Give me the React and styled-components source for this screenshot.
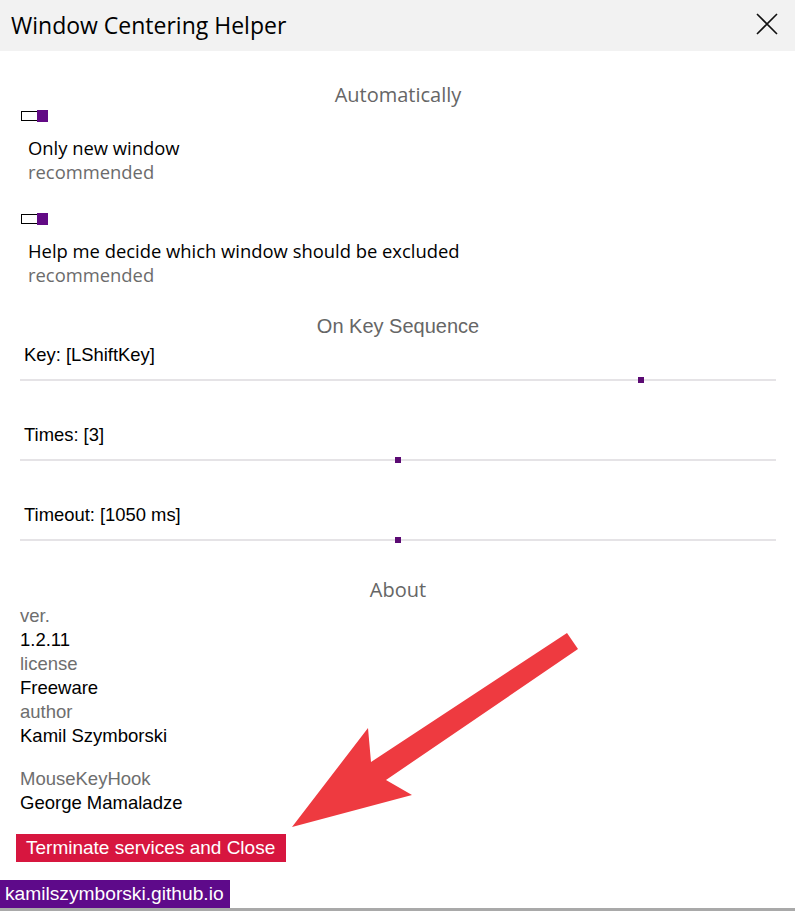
import styled, { createGlobalStyle } from 'styled-components'

const GlobalStyle = createGlobalStyle`
    html, body {
        margin: 0;
        padding: 0;
        background: #ffffff;
    }
    body {
        font-family: 'Liberation Sans', Arial, sans-serif;
        color: #000;
    }
`

const accent = '#620a85'

const options = [
    { title: 'Only new window', note: 'recommended' },
    { title: 'Help me decide which window should be excluded', note: 'recommended' },
]

const sliders = [
    { label: 'Key: [LShiftKey]', value: 82.2 },
    { label: 'Times: [3]', value: 50 },
    { label: 'Timeout: [1050 ms]', value: 50 },
]

const about = [
    { label: 'ver.', value: '1.2.11' },
    { label: 'license', value: 'Freeware' },
    { label: 'author', value: 'Kamil Szymborski' },
]

const Toggle = () => (
    <ToggleBox>
        <ToggleTrack />
        <ToggleKnob />
    </ToggleBox>
)

const Slider = ({ label, value }) => (
    <SliderBlock>
        <SliderLabel>{label}</SliderLabel>
        <Track>
            <Thumb style={{ left: `${value}%` }} />
        </Track>
    </SliderBlock>
)

export default function App() {
    return (
        <>
            <GlobalStyle />
            <Window>
                <TitleBar>
                    <Title>Window Centering Helper</Title>
                    <CloseButton>
                        <svg width="22" height="22" viewBox="0 0 22 22">
                            <path
                                d="M1 1 L21 21 M21 1 L1 21"
                                stroke="#111"
                                strokeWidth="1.6"
                                fill="none"
                            />
                        </svg>
                    </CloseButton>
                </TitleBar>

                <Content>
                    <SectionTitle top={31}>Automatically</SectionTitle>
                    {options.map((o, i) => (
                        <Option key={i} first={i === 0}>
                            <Toggle />
                            <OptionTitle>{o.title}</OptionTitle>
                            <Note>{o.note}</Note>
                        </Option>
                    ))}

                    <SectionTitle top={26} plain>
                        On Key Sequence
                    </SectionTitle>
                    <SliderList>
                        {sliders.map((s, i) => (
                            <Slider key={i} {...s} />
                        ))}
                    </SliderList>

                    <SectionTitle top={-6}>About</SectionTitle>
                    <AboutList>
                        {about.map((a, i) => (
                            <div key={i}>
                                <AboutLabel>{a.label}</AboutLabel>
                                <AboutValue>{a.value}</AboutValue>
                            </div>
                        ))}
                        <Credit>
                            <AboutLabel>MouseKeyHook</AboutLabel>
                            <AboutValue>George Mamaladze</AboutValue>
                        </Credit>
                    </AboutList>

                    <DangerButton>Terminate services and Close</DangerButton>
                </Content>

                <Footer>
                    <SiteLink>kamilszymborski.github.io</SiteLink>
                </Footer>

                <Arrow viewBox="0 0 795 911" width="795" height="911">
                    <polygon
                        points="292,827 368,728 371,762 567,633 578,649 386,780 412,795"
                        fill="#ee3a40"
                    />
                </Arrow>
            </Window>
        </>
    )
}

const Window = styled.div`
    position: relative;
    width: 795px;
    height: 911px;
    display: flex;
    flex-direction: column;
    overflow: hidden;
    background: #fff;
    border-bottom: 3px solid #a9a9a9;
    box-sizing: border-box;
`

const TitleBar = styled.div`
    height: 51px;
    flex: none;
    background: #f2f2f2;
    display: flex;
    align-items: center;
    justify-content: space-between;
    padding: 0 17px 0 11px;
`

const Title = styled.div`
    font-family: 'Open Sans', 'Noto Sans', sans-serif;
    font-size: 23px;
    color: #000;
    margin-top: -2px;
`

const CloseButton = styled.div`
    width: 22px;
    height: 22px;
    display: flex;
    margin-top: -4px;
`

const Content = styled.div`
    flex: 1;
    display: flex;
    flex-direction: column;
    padding: 0 19px 0 20px;
`

const SectionTitle = styled.div`
    margin-top: ${({ top }) => top}px;
    text-align: center;
    font-family: ${({ plain }) =>
        plain
            ? "'Liberation Sans', Arial, sans-serif"
            : "'Open Sans', 'Noto Sans', sans-serif"};
    font-size: 20px;
    line-height: 26px;
    color: #666;
`

const Option = styled.div`
    display: flex;
    flex-direction: column;
    align-items: flex-start;
    margin-top: ${({ first }) => (first ? 2 : 29)}px;
`

const ToggleBox = styled.div`
    display: flex;
    align-items: center;
    height: 12px;
    margin-left: 1px;
`

const ToggleTrack = styled.div`
    width: 15px;
    height: 8px;
    border: 1px solid #000;
    border-right: none;
    background: #fff;
`

const ToggleKnob = styled.div`
    width: 11px;
    height: 12px;
    background: ${accent};
`

const OptionTitle = styled.div`
    margin: 14px 0 0 8px;
    font-family: 'Open Sans', 'Noto Sans', sans-serif;
    font-size: 18.4px;
    line-height: 24px;
    color: #000;
`

const Note = styled(OptionTitle)`
    margin-top: 0;
    color: #6b6b6b;
`

const SliderList = styled.div`
    display: flex;
    flex-direction: column;
    margin-top: 4px;
`

const SliderBlock = styled.div`
    display: flex;
    flex-direction: column;
    margin-bottom: 40px;
`

const SliderLabel = styled.div`
    font-size: 18.4px;
    line-height: 24px;
    padding-left: 4px;
    color: #000;
`

const Track = styled.div`
    position: relative;
    height: 2px;
    margin-top: 12px;
    margin-bottom: 2px;
    background: #e5e3e6;
`

const Thumb = styled.div`
    position: absolute;
    top: -2px;
    width: 6px;
    height: 6px;
    margin-left: -3px;
    background: #5b0a73;
`

const AboutList = styled.div`
    display: flex;
    flex-direction: column;
    margin-top: 1px;
`

const AboutLabel = styled.div`
    font-size: 18.5px;
    line-height: 24px;
    color: #6e6e6e;
`

const AboutValue = styled.div`
    font-size: 18.5px;
    line-height: 24px;
    color: #000;
`

const Credit = styled.div`
    margin-top: 19px;
`

const DangerButton = styled.button`
    align-self: flex-start;
    margin: 19px 0 0 -4px;
    height: 28px;
    padding: 0 11px 0 10px;
    border: none;
    background: #d7163f;
    color: #fff;
    font-family: 'Liberation Sans', Arial, sans-serif;
    font-size: 19px;
    line-height: 28px;
    cursor: pointer;
`

const Footer = styled.div`
    display: flex;
`

const SiteLink = styled.a`
    display: block;
    height: 28px;
    line-height: 28px;
    padding: 0 6px 0 5px;
    background: #5e0a8a;
    color: #fff;
    font-size: 19.2px;
    text-decoration: none;
`

const Arrow = styled.svg`
    position: absolute;
    left: 0;
    top: 0;
    pointer-events: none;
`
